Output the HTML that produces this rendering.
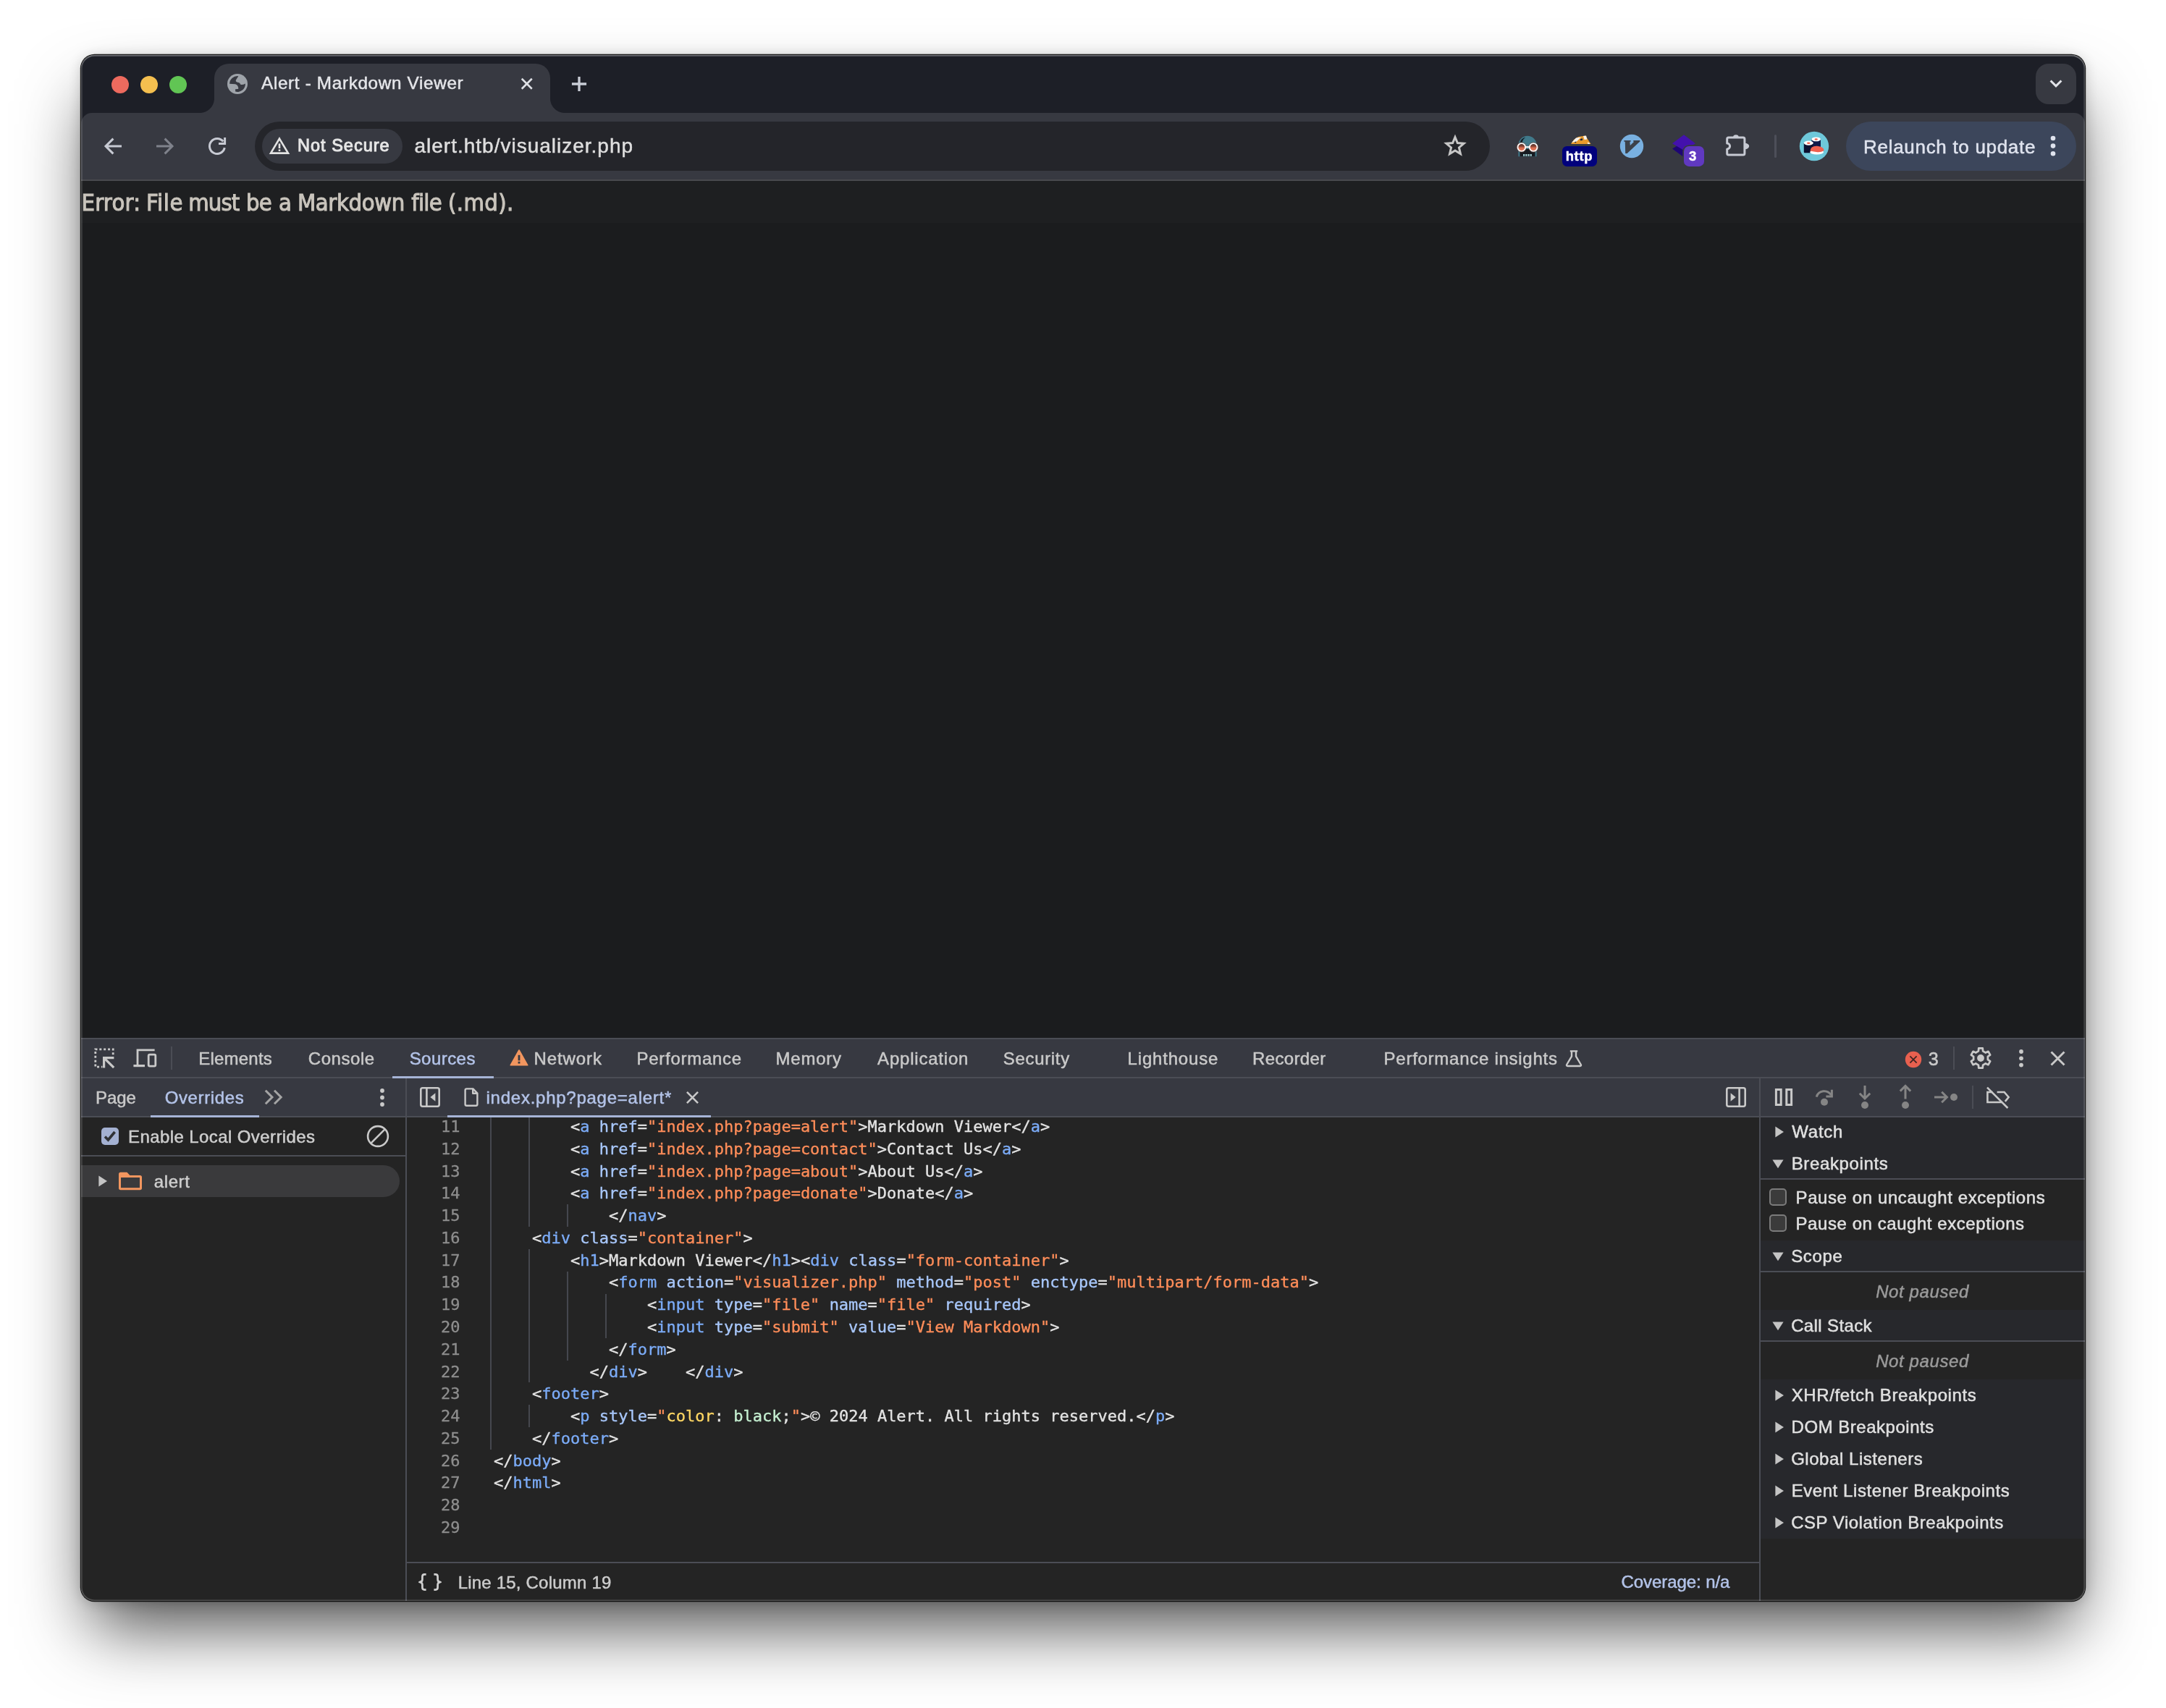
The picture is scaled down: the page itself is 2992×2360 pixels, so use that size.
<!DOCTYPE html>
<html lang="en">
<head>
<meta charset="utf-8">
<title>Alert - Markdown Viewer</title>
<style>
html,body{margin:0;padding:0;background:#fff}
body{width:2992px;height:2360px;position:relative;overflow:hidden;font-family:"Liberation Sans",sans-serif;-webkit-font-smoothing:antialiased}
.a{position:absolute}
.t{position:absolute;white-space:pre;line-height:1;-webkit-text-stroke:.5px}
svg{position:absolute;overflow:visible}
#shadow{left:112px;top:76px;width:2768px;height:2136px;border-radius:18.5px;box-shadow:0 0 0 1.2px rgba(0,0,0,.88),0 2px 18px rgba(0,0,0,.18),0 50px 96px -14px rgba(0,0,0,.7)}
#win{left:112px;top:76px;width:2768px;height:2136px;border-radius:18.5px;overflow:hidden;background:#242424}
#stage{left:-112px;top:-76px;width:2992px;height:2360px;will-change:transform}
#rim{left:112px;top:76px;width:2768px;height:2136px;border-radius:18.5px;box-shadow:inset 0 0 0 1.6px rgba(255,255,255,.2),inset 0 2px 0 rgba(255,255,255,.16);pointer-events:none}
.mono{font-family:"DejaVu Sans Mono","Liberation Mono",monospace}
.code{position:absolute;left:682.8px;white-space:pre;font-family:"DejaVu Sans Mono","Liberation Mono",monospace;font-size:22px;line-height:30px;height:30px;color:#e3e3e3;-webkit-text-stroke:.35px}
.ln{position:absolute;left:562px;width:73.5px;text-align:right;font-family:"DejaVu Sans Mono","Liberation Mono",monospace;font-size:22px;line-height:30px;height:30px;color:#8e8e8e;-webkit-text-stroke:.3px}
.tg{color:#7cacf8}.at{color:#a8c7fa}.vl{color:#fe8d59}.cp{color:#fdd663}.cv{color:#c4eed0}
.guide{position:absolute;width:2px;background:#45474e}
</style>
</head>
<body>
<div class="a" id="shadow"></div>
<div class="a" id="win"><div class="a" id="stage">

<div class="a" style="left:112px;top:76px;width:2768px;height:102px;background:#1d1f27;"></div>
<div class="a" style="left:112px;top:156px;width:2768px;height:92px;background:#373941;border-radius:15px 15px 0 0;"></div>
<div class="a" style="left:296px;top:88px;width:464px;height:70px;background:#373941;border-radius:20px 20px 0 0;"></div>
<div class="a" style="left:276px;top:136px;width:20px;height:20px;background:radial-gradient(circle at 0 0,#1d1f27 19.5px,#373941 20.5px)"></div>
<div class="a" style="left:760px;top:136px;width:20px;height:20px;background:radial-gradient(circle at 100% 0,#1d1f27 19.5px,#373941 20.5px)"></div>
<div class="a" style="left:154px;top:105px;width:24px;height:24px;border-radius:50%;background:#ed6a5e"></div>
<div class="a" style="left:194px;top:105px;width:24px;height:24px;border-radius:50%;background:#f4bf4f"></div>
<div class="a" style="left:234px;top:105px;width:24px;height:24px;border-radius:50%;background:#61c554"></div>
<svg class="a" style="left:313.0px;top:101.0px" width="30" height="30" viewBox="-15.0 -15.0 30 30" ><circle r="14" fill="#9ea3a9"/><path d="M-10.9,-0.2 A10.9,10.9 0 0 1 1.3,-10.8 L-1.6,-6.2 Q-3.4,-3.6 -0.6,-2.6 L2.2,-1.8 Q3.6,-1.2 4,0.4 Q6.5,2.2 10.9,-0.6 A10.9,10.9 0 0 1 -2.9,10.5 L-2.9,7.3 L0.6,7 Q1.6,6.8 1.3,5.6 Q0.6,1.2 -3,0.2 Z" fill="#373941"/></svg>
<span class="t " style="left:361.03px;top:103.2px;font-size:24.3px;color:#e4e5e9;letter-spacing:0.657px;-webkit-text-stroke:0.5px;">Alert - Markdown Viewer</span>
<svg class="a" style="left:718.2px;top:106.2px" width="19.5" height="19.5" viewBox="-9.75 -9.75 19.5 19.5" ><path d="M-7.02,-7.02L7.02,7.02M7.02,-7.02L-7.02,7.02" fill="none" stroke="#dfe1e6" stroke-width="2.6" /></svg>
<svg class="a" style="left:786.0px;top:102.0px" width="28" height="28" viewBox="-14.0 -14.0 28 28" ><path d="M-10.08,0H10.08M0,-10.08V10.08" fill="none" stroke="#c9cdd6" stroke-width="3.3" /></svg>
<div class="a" style="left:2812px;top:88px;width:56px;height:56px;background:#373941;border-radius:18px;"></div>
<svg class="a" style="left:2826.0px;top:102.0px" width="28" height="28" viewBox="-14.0 -14.0 28 28" ><path d="M-7.4,-4.5L0,2.9L7.4,-4.5" fill="none" stroke="#e3e5ea" stroke-width="3" stroke-linejoin="miter"/></svg>
<svg class="a" style="left:140.0px;top:186.0px" width="32" height="32" viewBox="-16.0 -16.0 32 32" ><path d="M12,0H-9M0.4,-10.4L-10,0L0.4,10.4" fill="none" stroke="#c7cad3" stroke-width="3" stroke-linejoin="miter"/></svg>
<svg class="a" style="left:212.0px;top:186.0px" width="32" height="32" viewBox="-16.0 -16.0 32 32" ><path d="M-12,0H9M-0.4,-10.4L10,0L-0.4,10.4" fill="none" stroke="#7f828b" stroke-width="3" stroke-linejoin="miter"/></svg>
<svg class="a" style="left:284.0px;top:186.0px" width="32" height="32" viewBox="-16.0 -16.0 32 32" ><path d="M10.27,2.18 A10.5,10.5 0 1 1 8.27,-6.46" fill="none" stroke="#c7cad3" stroke-width="3" /><path d="M10.6,-12V-3.4H2" fill="none" stroke="#c7cad3" stroke-width="3" /></svg>
<div class="a" style="left:352px;top:168px;width:1706px;height:68px;background:#24252a;border-radius:34px;"></div>
<div class="a" style="left:362px;top:178px;width:194px;height:48px;background:#373941;border-radius:24px;"></div>
<svg class="a" style="left:370.0px;top:185.0px" width="32" height="32" viewBox="-16.0 -16.0 32 32" ><path d="M0,-9.4L12,10.6H-12Z" fill="none" stroke="#e3e3e3" stroke-width="2.6" stroke-linejoin="miter"/><rect x="-1.3" y="-2.6" width="2.6" height="6.6" fill="#e3e3e3"/><rect x="-1.3" y="5.4" width="2.6" height="2.6" fill="#e3e3e3"/></svg>
<span class="t " style="left:411.06px;top:189.7px;font-size:23.5px;color:#e6e6e6;letter-spacing:1.010px;-webkit-text-stroke:1.0px;">Not Secure</span>
<span class="t " style="left:572.52px;top:188.3px;font-size:28px;color:#dedede;letter-spacing:0.998px;">alert.htb/visualizer.php</span>
<svg class="a" style="left:1993.0px;top:184.0px" width="34" height="34" viewBox="-17.0 -17.0 34 34" ><polygon points="0.00,-11.50 3.35,-3.41 12.08,-2.72 5.42,2.96 7.46,11.47 0.00,6.90 -7.46,11.47 -5.42,2.96 -12.08,-2.72 -3.35,-3.41" fill="none" stroke="#c7c7c7" stroke-width="3" stroke-linejoin="miter"/></svg>
<svg class="a" style="left:2094.0px;top:186.0px" width="32" height="32" viewBox="-16.0 -16.0 32 32" ><defs><linearGradient id="lens" x1="0" y1="0" x2="0" y2="1"><stop offset="0" stop-color="#3b2724"/><stop offset=".38" stop-color="#8a4636"/><stop offset=".6" stop-color="#de6f51"/><stop offset="1" stop-color="#e27a5c"/></linearGradient></defs><path d="M-12.6,14.2 V-1.6 A12.6,12.6 0 0 1 12.6,-1.6 V14.2 Z" fill="#40798a"/><path d="M-10.6,4 H10.6 V14.2 H-10.6 Z" fill="#171c22"/><path d="M-10.2,-5.6 Q-8.6,-10.6 -3,-12.2 Q-6.6,-9.4 -7.6,-5 Z" fill="#0f1a22"/><circle cx="-8.2" cy="1.5" r="5.4" fill="url(#lens)" stroke="#fff" stroke-width="1.9"/><circle cx="8.2" cy="1.5" r="5.4" fill="url(#lens)" stroke="#fff" stroke-width="1.9"/><circle cx="-8.2" cy="1.5" r="6.7" fill="none" stroke="#7a4334" stroke-width=".7" opacity=".7"/><circle cx="8.2" cy="1.5" r="6.7" fill="none" stroke="#7a4334" stroke-width=".7" opacity=".7"/><path d="M-2.6,1.2 H2.6" stroke="#fff" stroke-width="2"/><path d="M-5.9,12.4 H5.9" stroke="#a9d8dc" stroke-width="2.6" stroke-dasharray="2.1 1.1"/></svg>
<svg class="a" style="left:2156.0px;top:180.0px" width="52" height="52" viewBox="-26.0 -26.0 52 52" ><rect x="-24" y="-4.1" width="48" height="28" rx="6.5" fill="#01017c"/><path d="M-12,-7 L-8,-13 L-2,-17 L8,-18.5 L11,-14 L15.5,-7 Z" fill="#ea9a2c"/><path d="M-11,-9 L-5,-15.5 L2,-16.5 L-4,-10.5 Z M5,-18 L9,-18.4 L10.4,-13.6 L6.6,-13 Z M11,-9.6 L14.4,-8 L14,-7 L11,-7.2 Z" fill="#f6f3ee"/><path d="M0.4,-13.6 L3.6,-15 L4.4,-12.6 L1.6,-11.6 Z M-7,-9.6 L-5,-10.4 L-4.6,-9 L-6.4,-8.6 Z" fill="#1d2a44"/><text x="-0.6" y="15.5" text-anchor="middle" font-family="Liberation Sans, sans-serif" font-weight="bold" font-size="18.4" letter-spacing="0.7" stroke="#fff" stroke-width="0.5" fill="#fff">http</text></svg>
<svg class="a" style="left:2237.0px;top:185.0px" width="34" height="34" viewBox="-17.0 -17.0 34 34" ><circle r="16.2" fill="#79b0e0"/><path d="M-10.6,-8.1 H-1.4 V-6.2 H-2.6 L-2.2,-1 L3,-6 L2.3,-6.2 V-8.1 H11.3 V-6.5 L-6.4,10.1 H-8.8 L-9.2,-6.2 H-10.6 Z" fill="#3c4149"/></svg>
<svg class="a" style="left:2306.0px;top:180.0px" width="52" height="52" viewBox="-26.0 -26.0 52 52" ><path d="M-22,-0.4 L-6,-10 L10,-0.4 L-6,11.2 Z" fill="#1e0575"/><path d="M-22,-7.8 L-6,-19.8 L10,-7.8 L-6,1.8 Z" fill="#4311ad"/><rect x="-7.6" y="-5.7" width="31.2" height="31.2" rx="8.6" fill="#373941"/><rect x="-6" y="-4.1" width="28" height="28" rx="7" fill="#6039c0"/><text x="6.2" y="15.9" text-anchor="middle" font-family="Liberation Sans, sans-serif" font-weight="bold" font-size="18.5" stroke="#fff" stroke-width="0.4" fill="#fff">3</text></svg>
<svg class="a" style="left:2382.0px;top:182.0px" width="34" height="38" viewBox="-17.0 -19.0 34 38" ><path d="M-13.3,-2.9 V-9.1 Q-13.3,-11.1 -11.3,-11.1 H8.9 Q10.9,-11.1 10.9,-9.1 V11.1 Q10.9,13.1 8.9,13.1 H-11.3 Q-13.3,13.1 -13.3,11.1 V4.9 A3.9,3.9 0 0 0 -13.3,-2.9 Z" fill="none" stroke="#c7cad3" stroke-width="3" stroke-linejoin="round"/><path d="M-4.9,-11.4 A3.8,3.3 0 0 1 2.7,-11.4 Z M11.2,-3.2 A6,4.2 0 0 1 11.2,5.2 Z" fill="#c7cad3"/></svg>
<div class="a" style="left:2451px;top:186px;width:3px;height:32px;background:#4d4f59;border-radius:1.5px;"></div>
<svg class="a" style="left:2485.0px;top:181.0px" width="42" height="42" viewBox="-21.0 -21.0 42 42" ><circle r="20.2" fill="#6ec8da"/><rect x="-3.6" y="-10.6" width="12.6" height="13" rx="1.2" fill="#101a4a"/><ellipse cx="2.7" cy="-9.6" rx="6.3" ry="2.9" fill="#fff"/><ellipse cx="2.7" cy="-9.5" rx="2.2" ry="1.2" fill="#f0604f"/><rect x="-14.2" y="-5" width="13" height="14.2" rx="1.2" fill="#0c1030"/><ellipse cx="-7.7" cy="-4.4" rx="6.5" ry="3.1" fill="#fff"/><ellipse cx="-7.7" cy="-4.3" rx="2.3" ry="1.3" fill="#f0604f"/><ellipse cx="3.6" cy="8.2" rx="9.4" ry="3.4" fill="#fff"/><path d="M-5.6,6.4 Q-5,-0.6 4,-0.2 Q13.2,0.6 13.6,6 Q9,9 3,8 Q-2,7.2 -5.6,6.4 Z" fill="#f0604f"/></svg>
<div class="a" style="left:2550px;top:168px;width:318px;height:68px;background:#3c465b;border-radius:34px;"></div>
<span class="t " style="left:2574.07px;top:190.0px;font-size:26px;color:#dfe3ee;letter-spacing:0.696px;">Relaunch to update</span>
<svg class="a" style="left:2830.0px;top:185.2px" width="12" height="33.2" viewBox="-6.0 -16.6 12 33.2" ><circle cx="0" cy="-10.6" r="3.3" fill="#dfe3ee"/><circle cx="0" cy="0" r="3.3" fill="#dfe3ee"/><circle cx="0" cy="10.6" r="3.3" fill="#dfe3ee"/></svg>
<div class="a" style="left:112px;top:248px;width:2768px;height:2px;background:#494a4e;"></div>
<div class="a" style="left:112px;top:250px;width:2768px;height:1184px;background:#1b1c1e;"></div>
<div class="a" style="left:112px;top:250px;width:2768px;height:58px;background:#1e1f21;"></div>
<p class="a" id="msg" style="left:0;top:0;margin:0">
<span class="t " style="left:112.41px;top:263.5px;font-size:32.5px;color:#c9c4bc;letter-spacing:0.265px;font-family:'DejaVu Sans Condensed','DejaVu Sans','Liberation Sans',sans-serif;-webkit-text-stroke:1.0px;">Error: </span>
<span class="t " style="left:201.89px;top:263.5px;font-size:32.5px;color:#c9c4bc;letter-spacing:0.663px;font-family:'DejaVu Sans Condensed','DejaVu Sans','Liberation Sans',sans-serif;-webkit-text-stroke:1.0px;">File </span>
<span class="t " style="left:260.14px;top:263.5px;font-size:32.5px;color:#c9c4bc;letter-spacing:-0.843px;font-family:'DejaVu Sans Condensed','DejaVu Sans','Liberation Sans',sans-serif;-webkit-text-stroke:1.0px;">must </span>
<span class="t " style="left:340.05px;top:263.5px;font-size:32.5px;color:#c9c4bc;letter-spacing:-0.987px;font-family:'DejaVu Sans Condensed','DejaVu Sans','Liberation Sans',sans-serif;-webkit-text-stroke:1.0px;">be </span>
<span class="t " style="left:384.93px;top:263.5px;font-size:32.5px;color:#c9c4bc;font-family:'DejaVu Sans Condensed','DejaVu Sans','Liberation Sans',sans-serif;-webkit-text-stroke:1.0px;">a </span>
<span class="t " style="left:411.02px;top:263.5px;font-size:32.5px;color:#c9c4bc;letter-spacing:-0.400px;font-family:'DejaVu Sans Condensed','DejaVu Sans','Liberation Sans',sans-serif;-webkit-text-stroke:1.0px;">Markdown </span>
<span class="t " style="left:568.37px;top:263.5px;font-size:32.5px;color:#c9c4bc;letter-spacing:-0.749px;font-family:'DejaVu Sans Condensed','DejaVu Sans','Liberation Sans',sans-serif;-webkit-text-stroke:1.0px;">file </span>
<span class="t " style="left:619.00px;top:263.5px;font-size:32.5px;color:#c9c4bc;letter-spacing:0.365px;font-family:'DejaVu Sans Condensed','DejaVu Sans','Liberation Sans',sans-serif;-webkit-text-stroke:1.0px;">(.md).</span>
</p>
<div class="a" style="left:112px;top:1434px;width:2768px;height:778px;background:#242424;"></div>
<div class="a" style="left:112px;top:1434px;width:2768px;height:110px;background:#373941;"></div>
<div class="a" style="left:112px;top:1434px;width:2768px;height:2px;background:#4b4d55;"></div>
<div class="a" style="left:112px;top:1488px;width:2768px;height:2px;background:#4b4d55;"></div>
<div class="a" style="left:112px;top:1542px;width:2768px;height:2px;background:#4b4d55;"></div>
<svg class="a" style="left:129.0px;top:1447.0px" width="30" height="30" viewBox="-15.0 -15.0 30 30" ><path d="M-2.6,12.2 H-12.2 V-12.2 H12.2 V-2.6" fill="none" stroke="#c9c9c9" stroke-width="2.8" stroke-dasharray="3 2.86" stroke-dashoffset="1.5"/><path d="M13.2,13.2 L-0.2,-0.2 M-0.4,13.4 V-0.4 H13.4" fill="none" stroke="#c9c9c9" stroke-width="3.2" /></svg>
<svg class="a" style="left:183.0px;top:1447.0px" width="34" height="30" viewBox="-17.0 -15.0 34 30" ><path d="M13.6,-11.2 H-10 V11.6" fill="none" stroke="#c9c9c9" stroke-width="2.8" /><path d="M-15.6,10.6 H0" fill="none" stroke="#c9c9c9" stroke-width="3.2" /><rect x="5.2" y="-4.8" width="9.6" height="16" rx="1.6" fill="none" stroke="#c9c9c9" stroke-width="2.8"/></svg>
<div class="a" style="left:236px;top:1446px;width:2px;height:32px;background:#4b4d55;"></div>
<span class="t " style="left:274.25px;top:1450.7px;font-size:24px;color:#c9c9c9;letter-spacing:0.213px;">Elements</span>
<span class="t " style="left:425.77px;top:1450.7px;font-size:24px;color:#c9c9c9;letter-spacing:0.550px;">Console</span>
<span class="t " style="left:565.63px;top:1450.7px;font-size:24px;color:#b3c3e8;letter-spacing:0.453px;">Sources</span>
<span class="t " style="left:737.53px;top:1450.7px;font-size:24px;color:#c9c9c9;letter-spacing:0.899px;">Network</span>
<span class="t " style="left:879.53px;top:1450.7px;font-size:24px;color:#c9c9c9;letter-spacing:0.728px;">Performance</span>
<span class="t " style="left:1071.53px;top:1450.7px;font-size:24px;color:#c9c9c9;letter-spacing:0.782px;">Memory</span>
<span class="t " style="left:1212.09px;top:1450.7px;font-size:24px;color:#c9c9c9;letter-spacing:0.792px;">Application</span>
<span class="t " style="left:1385.78px;top:1450.7px;font-size:24px;color:#c9c9c9;letter-spacing:0.674px;">Security</span>
<span class="t " style="left:1557.61px;top:1450.7px;font-size:24px;color:#c9c9c9;letter-spacing:0.804px;">Lighthouse</span>
<span class="t " style="left:1729.95px;top:1450.7px;font-size:24px;color:#c9c9c9;letter-spacing:0.382px;">Recorder</span>
<span class="t " style="left:1911.61px;top:1450.7px;font-size:24px;color:#c9c9c9;letter-spacing:0.730px;">Performance insights</span>
<div class="a" style="left:542px;top:1487px;width:140px;height:3px;background:#a6b4d6;"></div>
<svg class="a" style="left:703.0px;top:1448.0px" width="28" height="28" viewBox="-14.0 -14.0 28 28" ><path d="M0,-11 L11.8,9.8 H-11.8 Z" fill="#f2965f" stroke="#f2965f" stroke-width="1.6" stroke-linejoin="round"/><rect x="-1.4" y="-4.2" width="2.8" height="7.6" fill="#373941"/><rect x="-1.4" y="4.8" width="2.8" height="2.8" fill="#373941"/></svg>
<svg class="a" style="left:2161.0px;top:1449.8px" width="26" height="26" viewBox="-13.0 -13.0 26 26" ><path d="M-5.2,-10.6 H5.2 M-3,-10.6 V-3.4 L-9.8,8 Q-10.6,10 -8.6,10 H8.6 Q10.6,10 9.8,8 L3,-3.4 V-10.6" fill="none" stroke="#c9c9c9" stroke-width="2.4" stroke-linejoin="round"/></svg>
<svg class="a" style="left:2631.0px;top:1452.0px" width="24" height="24" viewBox="-12.0 -12.0 24 24" ><circle r="11.2" fill="#e8604f"/><path d="M-4.6,-4.6L4.6,4.6M4.6,-4.6L-4.6,4.6" fill="none" stroke="#3a2422" stroke-width="1.7" /></svg>
<span class="t " style="left:2663.75px;top:1451.3px;font-size:25.2px;color:#c9c9c9;">3</span>
<div class="a" style="left:2698px;top:1446px;width:2px;height:32px;background:#4b4d55;"></div>
<svg class="a" style="left:2719.0px;top:1445.0px" width="34" height="34" viewBox="-17.0 -17.0 34 34" ><path d="M-3.08,-9.62L-2.76,-13.62L2.76,-13.62L3.08,-9.62L6.79,-7.48L10.42,-9.20L13.18,-4.42L9.87,-2.14L9.87,2.14L13.18,4.42L10.42,9.20L6.79,7.48L3.08,9.62L2.76,13.62L-2.76,13.62L-3.08,9.62L-6.79,7.48L-10.42,9.20L-13.18,4.42L-9.87,2.14L-9.87,-2.14L-13.18,-4.42L-10.42,-9.20L-6.79,-7.48Z" fill="none" stroke="#c9c9c9" stroke-width="2.7" stroke-linejoin="round"/><circle r="4.9" fill="#c9c9c9"/></svg>
<svg class="a" style="left:2786.0px;top:1446.7px" width="12" height="30.6" viewBox="-6.0 -15.3 12 30.6" ><circle cx="0" cy="-9.3" r="2.9" fill="#c9c9c9"/><circle cx="0" cy="0" r="2.9" fill="#c9c9c9"/><circle cx="0" cy="9.3" r="2.9" fill="#c9c9c9"/></svg>
<svg class="a" style="left:2829.5px;top:1449.5px" width="25" height="25" viewBox="-12.5 -12.5 25 25" ><path d="M-9.0,-9.0L9.0,9.0M9.0,-9.0L-9.0,9.0" fill="none" stroke="#c9c9c9" stroke-width="2.875" /></svg>
<span class="t " style="left:131.99px;top:1504.7px;font-size:24px;color:#c9c9c9;letter-spacing:-0.066px;">Page</span>
<span class="t " style="left:227.64px;top:1504.7px;font-size:24px;color:#b3c3e8;letter-spacing:0.633px;">Overrides</span>
<div class="a" style="left:208px;top:1541px;width:150px;height:3px;background:#a6b4d6;"></div>
<svg class="a" style="left:364.0px;top:1504.0px" width="28" height="24" viewBox="-14.0 -12.0 28 24" ><path d="M-11.2,-9.2L-2,0L-11.2,9.2M1,-9.2L10.2,0L1,9.2" fill="none" stroke="#a4a4a4" stroke-width="3" /></svg>
<svg class="a" style="left:522.0px;top:1500.5px" width="12" height="31.0" viewBox="-6.0 -15.5 12 31.0" ><circle cx="0" cy="-9.5" r="2.9" fill="#c9c9c9"/><circle cx="0" cy="0" r="2.9" fill="#c9c9c9"/><circle cx="0" cy="9.5" r="2.9" fill="#c9c9c9"/></svg>
<div class="a" style="left:560px;top:1490px;width:2px;height:722px;background:#4b4d55;"></div>
<svg class="a" style="left:579.0px;top:1501.0px" width="30" height="30" viewBox="-15.0 -15.0 30 30" ><rect x="-12.7" y="-12.7" width="25.4" height="25.4" rx="2.4" fill="none" stroke="#c9c9c9" stroke-width="2.6"/><path d="M-4.6,-12V12" fill="none" stroke="#c9c9c9" stroke-width="2.6" /><path d="M7.4,-5.8 L0.4,0 L7.4,5.8 Z" fill="#c9c9c9"/></svg>
<svg class="a" style="left:640.0px;top:1502.0px" width="22" height="28" viewBox="-11.0 -14.0 22 28" ><path d="M2.4,-11.6 H-6.4 Q-8.4,-11.6 -8.4,-9.6 V9.8 Q-8.4,11.8 -6.4,11.8 H6.4 Q8.4,11.8 8.4,9.8 V-5.4 Z M2.2,-11.2 V-5.2 H8.2" fill="none" stroke="#c9c9c9" stroke-width="2.4" stroke-linejoin="round"/></svg>
<span class="t " style="left:671.54px;top:1504.7px;font-size:24px;color:#b3c3e8;letter-spacing:0.746px;">index.php?page=alert*</span>
<svg class="a" style="left:945.5px;top:1505.5px" width="21" height="21" viewBox="-10.5 -10.5 21 21" ><path d="M-7.56,-7.56L7.56,7.56M7.56,-7.56L-7.56,7.56" fill="none" stroke="#c9c9c9" stroke-width="2.6" /></svg>
<div class="a" style="left:618px;top:1541px;width:364px;height:3px;background:#a6b4d6;"></div>
<svg class="a" style="left:2383.0px;top:1501.0px" width="30" height="30" viewBox="-15.0 -15.0 30 30" ><rect x="-12.7" y="-12.7" width="25.4" height="25.4" rx="2.4" fill="none" stroke="#c9c9c9" stroke-width="2.6"/><path d="M4.6,-12V12" fill="none" stroke="#c9c9c9" stroke-width="2.6" /><path d="M-7.4,-5.8 L-0.4,0 L-7.4,5.8 Z" fill="#c9c9c9"/></svg>
<div class="a" style="left:2430px;top:1490px;width:2px;height:722px;background:#4b4d55;"></div>
<svg class="a" style="left:2450.0px;top:1502.0px" width="28" height="28" viewBox="-14.0 -14.0 28 28" ><rect x="-10.6" y="-10.5" width="6.8" height="21" fill="none" stroke="#c9c9c9" stroke-width="3"/><rect x="3.8" y="-10.5" width="6.8" height="21" fill="none" stroke="#c9c9c9" stroke-width="3"/></svg>
<svg class="a" style="left:2506.0px;top:1502.0px" width="28" height="28" viewBox="-14.0 -14.0 28 28" ><path d="M-10.8,-0.4 A11.2,11.2 0 0 1 9.4,-3" fill="none" stroke="#858585" stroke-width="3" /><path d="M10.4,-10.2 V-1 H2.4" fill="none" stroke="#858585" stroke-width="3" /><circle cx="0" cy="6.8" r="5" fill="#858585"/></svg>
<svg class="a" style="left:2566.0px;top:1498.0px" width="20" height="36" viewBox="-10.0 -18.0 20 36" ><path d="M0,-16 V1 M-7.2,-5.2 L0,2 L7.2,-5.2" fill="none" stroke="#858585" stroke-width="3" /><circle cx="0" cy="11" r="5" fill="#858585"/></svg>
<svg class="a" style="left:2622.0px;top:1498.0px" width="20" height="36" viewBox="-10.0 -18.0 20 36" ><path d="M0,2.4 V-14.4 M-7.2,-8.4 L0,-15.6 L7.2,-8.4" fill="none" stroke="#858585" stroke-width="3" /><circle cx="0" cy="11" r="5" fill="#858585"/></svg>
<svg class="a" style="left:2670.0px;top:1506.0px" width="36" height="20" viewBox="-18.0 -10.0 36 20" ><path d="M-16,0 H1 M-5.8,-7.2 L1.4,0 L-5.8,7.2" fill="none" stroke="#858585" stroke-width="3" /><circle cx="11" cy="0" r="5" fill="#858585"/></svg>
<div class="a" style="left:2724px;top:1500px;width:2px;height:32px;background:#4b4d55;"></div>
<svg class="a" style="left:2743.0px;top:1500.0px" width="34" height="32" viewBox="-17.0 -16.0 34 32" ><path d="M-7.6,-7 H-14.6 V7 H5.6 M-1.4,-7 H8.6 L14.6,0 L9.8,5.8" fill="none" stroke="#c9c9c9" stroke-width="2.6" stroke-linejoin="miter"/><path d="M-15,-13.4 L13.4,15" fill="none" stroke="#c9c9c9" stroke-width="2.6" /></svg>
<div class="a" style="left:140px;top:1558px;width:24px;height:24px;background:#a4b1d2;border-radius:5px;"></div>
<svg class="a" style="left:140.0px;top:1558.0px" width="24" height="24" viewBox="-12.0 -12.0 24 24" ><path d="M-7,0.6 L-2.6,5 L6.6,-6" fill="none" stroke="#303236" stroke-width="3.6" /></svg>
<span class="t " style="left:177.03px;top:1558.5px;font-size:24px;color:#cecece;letter-spacing:0.408px;">Enable Local Overrides</span>
<svg class="a" style="left:505.0px;top:1553.0px" width="34" height="34" viewBox="-17.0 -17.0 34 34" ><circle r="13.9" fill="none" stroke="#c9c9c9" stroke-width="2.6"/><path d="M-9.6,9.6 L9.6,-9.6" fill="none" stroke="#c9c9c9" stroke-width="2.6" /></svg>
<div class="a" style="left:112px;top:1596px;width:448px;height:2px;background:#4b4d55;"></div>
<div class="a" style="left:112px;top:1610px;width:440px;height:44px;background:#3a3a3c;border-radius:0 22px 22px 0;"></div>
<svg class="a" style="left:134.6px;top:1622.6px" width="14" height="18" viewBox="-7.0 -9.0 14 18" ><path d="M-5.6,-7.6 L6,0 L-5.6,7.6 Z" fill="#c4c4c4"/></svg>
<svg class="a" style="left:163.0px;top:1619.0px" width="34" height="26" viewBox="-17.0 -13.0 34 26" ><path d="M-16,-9.6 Q-16,-12.2 -13.4,-12.2 H-4.6 L-0.6,-8 H13.4 Q16,-8 16,-5.4 V9.6 Q16,12.2 13.4,12.2 H-13.4 Q-16,12.2 -16,9.6 Z" fill="#f2965f"/><rect x="-13" y="-5" width="26" height="14.2" fill="#3a3a3c"/></svg>
<span class="t " style="left:212.75px;top:1620.5px;font-size:24px;color:#cecece;letter-spacing:0.602px;">alert</span>
<div class="a" id="editor" style="left:0;top:0">
<div class="guide" style="left:677.0px;top:1544.0px;height:458.8px"></div>
<div class="guide" style="left:730.0px;top:1544.0px;height:151.1px"></div>
<div class="guide" style="left:730.0px;top:1725.9px;height:184.6px"></div>
<div class="guide" style="left:730.0px;top:1941.3px;height:30.8px"></div>
<div class="guide" style="left:783.0px;top:1664.4px;height:30.8px"></div>
<div class="guide" style="left:783.0px;top:1756.7px;height:123.1px"></div>
<div class="guide" style="left:835.9px;top:1787.5px;height:61.5px"></div>
<div class="ln" style="top:1542.10px">11</div>
<div class="code" style="left:682.0px;top:1542.10px">        &lt;<span class="tg">a</span> <span class="at">href</span>=<span class="vl">&quot;index.php?page=alert&quot;</span>&gt;Markdown Viewer&lt;/<span class="tg">a</span>&gt;</div>
<div class="ln" style="top:1572.87px">12</div>
<div class="code" style="left:682.0px;top:1572.87px">        &lt;<span class="tg">a</span> <span class="at">href</span>=<span class="vl">&quot;index.php?page=contact&quot;</span>&gt;Contact Us&lt;/<span class="tg">a</span>&gt;</div>
<div class="ln" style="top:1603.64px">13</div>
<div class="code" style="left:682.0px;top:1603.64px">        &lt;<span class="tg">a</span> <span class="at">href</span>=<span class="vl">&quot;index.php?page=about&quot;</span>&gt;About Us&lt;/<span class="tg">a</span>&gt;</div>
<div class="ln" style="top:1634.41px">14</div>
<div class="code" style="left:682.0px;top:1634.41px">        &lt;<span class="tg">a</span> <span class="at">href</span>=<span class="vl">&quot;index.php?page=donate&quot;</span>&gt;Donate&lt;/<span class="tg">a</span>&gt;</div>
<div class="ln" style="top:1665.18px">15</div>
<div class="code" style="left:682.0px;top:1665.18px">            &lt;/<span class="tg">nav</span>&gt;</div>
<div class="ln" style="top:1695.95px">16</div>
<div class="code" style="left:682.0px;top:1695.95px">    &lt;<span class="tg">div</span> <span class="at">class</span>=<span class="vl">&quot;container&quot;</span>&gt;</div>
<div class="ln" style="top:1726.72px">17</div>
<div class="code" style="left:682.0px;top:1726.72px">        &lt;<span class="tg">h1</span>&gt;Markdown Viewer&lt;/<span class="tg">h1</span>&gt;&lt;<span class="tg">div</span> <span class="at">class</span>=<span class="vl">&quot;form-container&quot;</span>&gt;</div>
<div class="ln" style="top:1757.49px">18</div>
<div class="code" style="left:682.0px;top:1757.49px">            &lt;<span class="tg">form</span> <span class="at">action</span>=<span class="vl">&quot;visualizer.php&quot;</span> <span class="at">method</span>=<span class="vl">&quot;post&quot;</span> <span class="at">enctype</span>=<span class="vl">&quot;multipart/form-data&quot;</span>&gt;</div>
<div class="ln" style="top:1788.26px">19</div>
<div class="code" style="left:682.0px;top:1788.26px">                &lt;<span class="tg">input</span> <span class="at">type</span>=<span class="vl">&quot;file&quot;</span> <span class="at">name</span>=<span class="vl">&quot;file&quot;</span> <span class="at">required</span>&gt;</div>
<div class="ln" style="top:1819.03px">20</div>
<div class="code" style="left:682.0px;top:1819.03px">                &lt;<span class="tg">input</span> <span class="at">type</span>=<span class="vl">&quot;submit&quot;</span> <span class="at">value</span>=<span class="vl">&quot;View Markdown&quot;</span>&gt;</div>
<div class="ln" style="top:1849.80px">21</div>
<div class="code" style="left:682.0px;top:1849.80px">            &lt;/<span class="tg">form</span>&gt;</div>
<div class="ln" style="top:1880.57px">22</div>
<div class="code" style="left:682.0px;top:1880.57px">          &lt;/<span class="tg">div</span>&gt;    &lt;/<span class="tg">div</span>&gt;</div>
<div class="ln" style="top:1911.34px">23</div>
<div class="code" style="left:682.0px;top:1911.34px">    &lt;<span class="tg">footer</span>&gt;</div>
<div class="ln" style="top:1942.11px">24</div>
<div class="code" style="left:682.0px;top:1942.11px">        &lt;<span class="tg">p</span> <span class="at">style</span>=<span class="vl">&quot;</span><span class="cp">color</span>: <span class="cv">black</span>;<span class="vl">&quot;</span>&gt;© 2024 Alert. All rights reserved.&lt;/<span class="tg">p</span>&gt;</div>
<div class="ln" style="top:1972.88px">25</div>
<div class="code" style="left:682.0px;top:1972.88px">    &lt;/<span class="tg">footer</span>&gt;</div>
<div class="ln" style="top:2003.65px">26</div>
<div class="code" style="left:682.0px;top:2003.65px">&lt;/<span class="tg">body</span>&gt;</div>
<div class="ln" style="top:2034.42px">27</div>
<div class="code" style="left:682.0px;top:2034.42px">&lt;/<span class="tg">html</span>&gt;</div>
<div class="ln" style="top:2065.19px">28</div>
<div class="ln" style="top:2095.96px">29</div>
</div>
<div class="a" style="left:562px;top:2158px;width:1868px;height:2px;background:#4b4d55;"></div>
<svg class="a" style="left:577.0px;top:2173.0px" width="34" height="26" viewBox="-17.0 -13.0 34 26" ><path d="M-5.4,-10.6 H-7.6 Q-10.6,-10.6 -10.6,-7.6 V-3.6 Q-10.6,-0.2 -14.6,0 Q-10.6,0.2 -10.6,3.6 V7.6 Q-10.6,10.6 -7.6,10.6 H-5.4" fill="none" stroke="#cfcfcf" stroke-width="2.7" stroke-linejoin="round"/><path d="M5.4,-10.6 H7.6 Q10.6,-10.6 10.6,-7.6 V-3.6 Q10.6,-0.2 14.6,0 Q10.6,0.2 10.6,3.6 V7.6 Q10.6,10.6 7.6,10.6 H5.4" fill="none" stroke="#cfcfcf" stroke-width="2.7" stroke-linejoin="round"/></svg>
<span class="t " style="left:632.67px;top:2174.9px;font-size:24px;color:#cbcbcb;letter-spacing:0.206px;">Line 15, Column 19</span>
<span class="t " style="left:2239.44px;top:2174.3px;font-size:24px;color:#b3c3e8;letter-spacing:-0.066px;">Coverage: n/a</span>
<div class="a" style="left:2432px;top:1544px;width:448px;height:582px;background:#27282c;"></div>
<div class="a" style="left:2432px;top:1630px;width:448px;height:84px;background:#242424;"></div>
<div class="a" style="left:2432px;top:1758px;width:448px;height:52px;background:#242424;"></div>
<div class="a" style="left:2432px;top:1854px;width:448px;height:52px;background:#242424;"></div>
<div class="a" style="left:2432px;top:1628px;width:448px;height:2px;background:#4b4d55;"></div>
<div class="a" style="left:2432px;top:1756px;width:448px;height:2px;background:#4b4d55;"></div>
<div class="a" style="left:2432px;top:1852px;width:448px;height:2px;background:#4b4d55;"></div>
<svg class="a" style="left:2450.5px;top:1554.5px" width="14" height="18" viewBox="-7.0 -9.0 14 18" ><path d="M-5.6,-7.6 L6,0 L-5.6,7.6 Z" fill="#c4c4c4"/></svg>
<span class="t " style="left:2475.36px;top:1551.7px;font-size:24px;color:#e0e0e0;letter-spacing:0.707px;">Watch</span>
<svg class="a" style="left:2447.2px;top:1600.7px" width="18" height="14" viewBox="-9.0 -7.0 18 14" ><path d="M-7.6,-5.4 L7.6,-5.4 L0,6.2 Z" fill="#c4c4c4"/></svg>
<span class="t " style="left:2474.65px;top:1595.7px;font-size:24px;color:#e0e0e0;letter-spacing:0.649px;">Breakpoints</span>
<svg class="a" style="left:2447.2px;top:1728.7px" width="18" height="14" viewBox="-9.0 -7.0 18 14" ><path d="M-7.6,-5.4 L7.6,-5.4 L0,6.2 Z" fill="#c4c4c4"/></svg>
<span class="t " style="left:2474.15px;top:1723.7px;font-size:24px;color:#e0e0e0;letter-spacing:0.668px;">Scope</span>
<svg class="a" style="left:2447.2px;top:1824.7px" width="18" height="14" viewBox="-9.0 -7.0 18 14" ><path d="M-7.6,-5.4 L7.6,-5.4 L0,6.2 Z" fill="#c4c4c4"/></svg>
<span class="t " style="left:2474.14px;top:1819.7px;font-size:24px;color:#e0e0e0;letter-spacing:0.383px;">Call Stack</span>
<svg class="a" style="left:2450.5px;top:1918.5px" width="14" height="18" viewBox="-7.0 -9.0 14 18" ><path d="M-5.6,-7.6 L6,0 L-5.6,7.6 Z" fill="#c4c4c4"/></svg>
<span class="t " style="left:2474.65px;top:1915.7px;font-size:24px;color:#e0e0e0;letter-spacing:0.619px;">XHR/fetch Breakpoints</span>
<svg class="a" style="left:2450.5px;top:1962.5px" width="14" height="18" viewBox="-7.0 -9.0 14 18" ><path d="M-5.6,-7.6 L6,0 L-5.6,7.6 Z" fill="#c4c4c4"/></svg>
<span class="t " style="left:2474.62px;top:1959.7px;font-size:24px;color:#e0e0e0;letter-spacing:0.515px;">DOM Breakpoints</span>
<svg class="a" style="left:2450.5px;top:2006.5px" width="14" height="18" viewBox="-7.0 -9.0 14 18" ><path d="M-5.6,-7.6 L6,0 L-5.6,7.6 Z" fill="#c4c4c4"/></svg>
<span class="t " style="left:2474.15px;top:2003.7px;font-size:24px;color:#e0e0e0;letter-spacing:0.545px;">Global Listeners</span>
<svg class="a" style="left:2450.5px;top:2050.5px" width="14" height="18" viewBox="-7.0 -9.0 14 18" ><path d="M-5.6,-7.6 L6,0 L-5.6,7.6 Z" fill="#c4c4c4"/></svg>
<span class="t " style="left:2474.65px;top:2047.7px;font-size:24px;color:#e0e0e0;letter-spacing:0.569px;">Event Listener Breakpoints</span>
<svg class="a" style="left:2450.5px;top:2094.5px" width="14" height="18" viewBox="-7.0 -9.0 14 18" ><path d="M-5.6,-7.6 L6,0 L-5.6,7.6 Z" fill="#c4c4c4"/></svg>
<span class="t " style="left:2474.14px;top:2091.7px;font-size:24px;color:#e0e0e0;letter-spacing:0.522px;">CSP Violation Breakpoints</span>
<div class="a" style="left:2444px;top:1642.0px;width:20px;height:20px;border:2px solid #7b7b7b;border-radius:5px;background:#3b3b3b"></div>
<span class="t " style="left:2480.56px;top:1642.9px;font-size:24px;color:#e0e0e0;letter-spacing:0.591px;">Pause on uncaught exceptions</span>
<div class="a" style="left:2444px;top:1678.0px;width:20px;height:20px;border:2px solid #7b7b7b;border-radius:5px;background:#3b3b3b"></div>
<span class="t " style="left:2480.56px;top:1678.9px;font-size:24px;color:#e0e0e0;letter-spacing:0.560px;">Pause on caught exceptions</span>
<span class="t " style="left:2591.17px;top:1772.7px;font-size:24px;color:#9a9a9a;letter-spacing:0.609px;font-style:italic;">Not paused</span>
<span class="t " style="left:2591.17px;top:1868.9px;font-size:24px;color:#9a9a9a;letter-spacing:0.609px;font-style:italic;">Not paused</span>
</div></div>
<div class="a" id="rim"></div>
</body>
</html>
